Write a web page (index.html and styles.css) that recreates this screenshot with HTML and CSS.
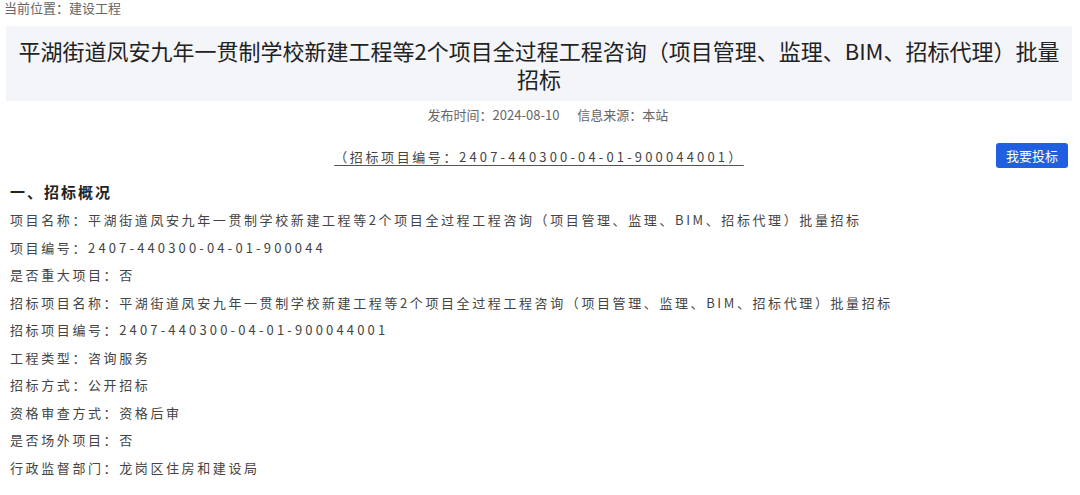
FILE: index.html
```html
<!DOCTYPE html>
<html lang="zh-CN">
<head>
<meta charset="utf-8">
<title>平湖街道凤安九年一贯制学校新建工程等2个项目全过程工程咨询批量招标</title>
<link rel="stylesheet" href="styles.css">
</head>
<body>
<div class="page">
  <div class="crumb">当前位置：建设工程</div>
  <div class="title-box">
    <h1 class="title">平湖街道凤安九年一贯制学校新建工程等2个项目全过程工程咨询（项目管理、监理、BIM、招标代理）批量招标</h1>
  </div>
  <div class="meta"><span>发布时间：2024-08-10</span><span>信息来源：本站</span></div>
  <div class="code-row">
    <span class="spacer"></span>
    <span class="code">（招标项目编号：<span class="num">2407-440300-04-01-900044001</span>）</span>
    <span class="btn-wrap"><a class="btn" href="#">我要投标</a></span>
  </div>
  <h2 class="section">一、招标概况</h2>
  <ul class="rows">
    <li>项目名称：平湖街道凤安九年一贯制学校新建工程等2个项目全过程工程咨询（项目管理、监理、BIM、招标代理）批量招标</li>
    <li>项目编号：<span class="num">2407-440300-04-01-900044</span></li>
    <li>是否重大项目：否</li>
    <li>招标项目名称：平湖街道凤安九年一贯制学校新建工程等2个项目全过程工程咨询（项目管理、监理、BIM、招标代理）批量招标</li>
    <li>招标项目编号：<span class="num">2407-440300-04-01-900044001</span></li>
    <li>工程类型：咨询服务</li>
    <li>招标方式：公开招标</li>
    <li>资格审查方式：资格后审</li>
    <li>是否场外项目：否</li>
    <li>行政监督部门：龙岗区住房和建设局</li>
  </ul>
</div>
</body>
</html>
```
FILE: styles.css
```css
* { box-sizing: border-box; }
html, body {
  margin: 0;
  padding: 0;
  background: #ffffff;
}
body {
  font-family: "Noto Sans CJK SC", "Noto Sans", "Liberation Sans", sans-serif;
  color: #333;
}
.page {
  padding: 0 8px 0 6px;
}
.crumb {
  font-size: 13px;
  line-height: 16px;
  color: #666;
  margin: 0 0 10px -2px;
}
.title-box {
  background: #f4f5f9;
  padding: 10px 4px 9px;
}
.title {
  margin: 0;
  font-size: 22px;
  line-height: 28px;
  font-weight: normal;
  color: #222;
  text-align: center;
}
.meta {
  margin-top: 4px;
  font-size: 13px;
  line-height: 20px;
  color: #666;
  text-align: center;
  display: flex;
  justify-content: center;
  gap: 18px;
  padding-left: 18px;
}
.code-row {
  margin-top: 18px;
  display: grid;
  grid-template-columns: 1fr auto 1fr;
  align-items: center;
  height: 25px;
}
.code {
  font-size: 13px;
  letter-spacing: 2.6px;
  color: #444;
  text-decoration: underline;
  text-decoration-color: #555;
  text-underline-offset: 3px;
  line-height: 20px;
  padding-top: 3px;
}
.num {
  letter-spacing: 3.15px;
}
.btn-wrap {
  display: flex;
  justify-content: flex-end;
  padding-right: 4px;
}
.btn {
  display: inline-flex;
  align-items: center;
  justify-content: center;
  width: 72px;
  height: 25px;
  background: #1f5fe0;
  color: #fff;
  font-size: 13px;
  text-decoration: none;
  border-radius: 3px;
}
.section {
  margin: 10px 0 0 4px;
  font-size: 15px;
  line-height: 28px;
  font-weight: bold;
  letter-spacing: 2px;
  color: #222;
}
.rows {
  list-style: none;
  margin: 0 0 0 4px;
  padding: 0;
}
.rows li {
  font-size: 13px;
  line-height: 27.5px;
  letter-spacing: 2.6px;
  color: #444;
  white-space: nowrap;
}
```
